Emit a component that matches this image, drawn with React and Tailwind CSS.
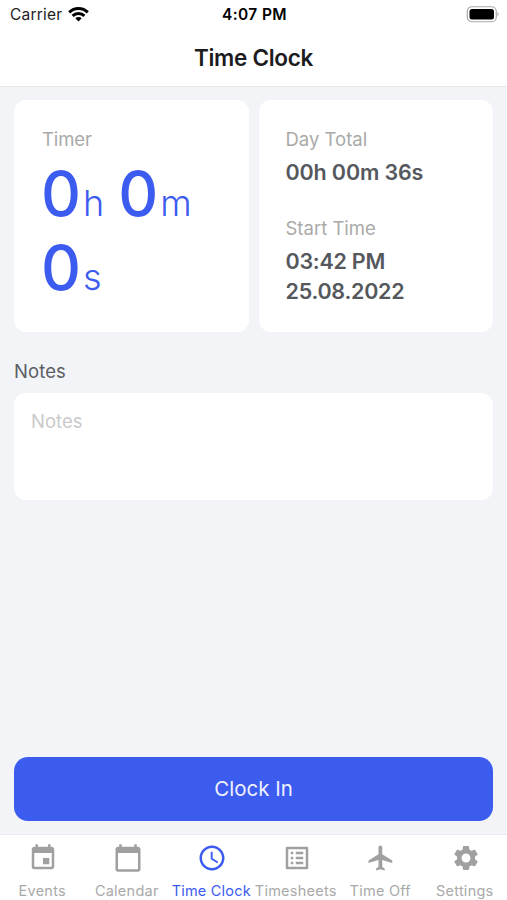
import { useState } from 'react';
import { MdAccessTime, MdCalendarToday, MdEvent, MdFlight, MdListAlt, MdSettings } from 'react-icons/md';

const TABS = [
    { label: 'Events', icon: MdEvent },
    { label: 'Calendar', icon: MdCalendarToday },
    { label: 'Time Clock', icon: MdAccessTime },
    { label: 'Timesheets', icon: MdListAlt },
    { label: 'Time Off', icon: MdFlight },
    { label: 'Settings', icon: MdSettings },
];

function StatusBar() {
    return (
        <div className="grid h-[29px] grid-cols-3 items-center pl-2.5 pr-2 text-[15.5px] text-[#222]">
            <div className="flex items-center gap-1.5">
                <span className="tracking-[0.2px]">Carrier</span>
                <svg width="21" height="15" viewBox="0 0 21 15" fill="none" stroke="#000" strokeWidth="2.9">
                    <path d="M1.2 5.4a13.2 13.2 0 0 1 18.6 0" />
                    <path d="M4.6 8.9a8.4 8.4 0 0 1 11.8 0" />
                    <path d="M10.5 14.4 7.3 11.3a4.6 4.6 0 0 1 6.4 0z" fill="#000" stroke="none" />
                </svg>
            </div>
            <span className="text-center font-semibold tracking-[0.35px] text-black">4:07 PM</span>
            <svg className="justify-self-end" width="33" height="17" viewBox="0 0 33 17">
                <rect x="1.25" y="0.75" width="29" height="15" rx="4.5" fill="none" stroke="#a9a9a9" strokeWidth="1.2" />
                <rect x="3.5" y="3" width="24.5" height="10.5" rx="2.5" fill="#000" />
                <path d="M31.4 6v4.6c1.6-.6 1.6-4 0-4.6z" fill="#a9a9a9" />
            </svg>
        </div>
    );
}

function TimerUnit({ value, unit }) {
    return (
        <span className="flex h-[74px] items-baseline whitespace-nowrap">
            <span className="text-[62px] leading-[74px] font-medium tracking-[-1.5px]">{value}</span>
            <span className="ml-[3.5px] text-[36px] leading-none font-light">{unit}</span>
        </span>
    );
}

export default function App() {
    const [activeTab, setActiveTab] = useState('Time Clock');
    const [notes, setNotes] = useState('');

    return (
        <div className="flex h-[900px] w-[507px] flex-col overflow-hidden bg-[#f2f4f8] font-['Inter',sans-serif]">
            <header className="h-[87px] shrink-0 border-b border-[#e6e7ea] bg-white">
                <StatusBar />
                <h1 className="text-center text-[22.5px] leading-[57px] font-semibold tracking-[-0.3px] text-[#1c1c1e]">
                    Time Clock
                </h1>
            </header>

            <main className="flex flex-1 flex-col px-3.5 pt-[13px] pb-[13px]">
                <div className="grid h-[232px] grid-cols-2 gap-2.5">
                    <section className="rounded-xl bg-white px-7 pt-[26px]">
                        <h2 className="text-[18.5px] leading-[26px] tracking-[-0.1px] text-[#a9a9a9]">Timer</h2>
                        <div className="mt-[5px] -ml-px flex flex-wrap gap-x-3.5 text-[#3c5bef]">
                            <TimerUnit value={0} unit="h" />
                            <TimerUnit value={0} unit="m" />
                            <TimerUnit value={0} unit="s" />
                        </div>
                    </section>
                    <section className="rounded-xl bg-white px-[27px] pt-[26px]">
                        <h2 className="text-[18.5px] leading-[26px] text-[#a9a9a9]">Day Total</h2>
                        <p className="mt-[5px] text-[21.5px] leading-[30px] font-semibold tracking-[-0.15px] text-[#55585c]">
                            00h 00m 36s
                        </p>
                        <h2 className="mt-7 text-[18.5px] leading-[26px] text-[#a9a9a9]">Start Time</h2>
                        <p className="mt-[5px] text-[21.5px] leading-[30px] font-semibold tracking-[-0.25px] text-[#55585c]">
                            03:42 PM
                            <br />
                            25.08.2022
                        </p>
                    </section>
                </div>

                <label htmlFor="notes" className="mt-[26px] text-[18.5px] leading-[26px] tracking-[0.1px] text-[#5b5e62]">
                    Notes
                </label>
                <textarea
                    id="notes"
                    value={notes}
                    onChange={(e) => setNotes(e.target.value)}
                    placeholder="Notes"
                    className="mt-[9px] h-[107px] resize-none rounded-xl bg-white px-[17px] py-[15px] text-[18.5px] leading-[26px] outline-none placeholder:text-[#cacaca]"
                />

                <button type="button" className="mt-auto h-16 rounded-[14px] bg-[#3c5bef] text-[20.5px] text-[#eef1fe]">
                    Clock In
                </button>
            </main>

            <nav className="grid h-[66px] shrink-0 grid-cols-6 border-t border-[#ebecef] bg-white">
                {TABS.map(({ label, icon: Icon }) => (
                    <button
                        key={label}
                        type="button"
                        onClick={() => setActiveTab(label)}
                        className={`flex flex-col items-center pt-[7.5px] ${activeTab === label ? 'text-[#3c5bef]' : 'text-[#a0a0a0]'}`}
                    >
                        <Icon size={30} className="ml-[1.5px]" />
                        <span
                            className={`mt-2 text-[14.5px] leading-5 whitespace-nowrap ${activeTab === label ? 'tracking-[0.2px]' : 'tracking-[0.25px] text-[#a9a9a9]'}`}
                        >
                            {label}
                        </span>
                    </button>
                ))}
            </nav>
        </div>
    );
}
